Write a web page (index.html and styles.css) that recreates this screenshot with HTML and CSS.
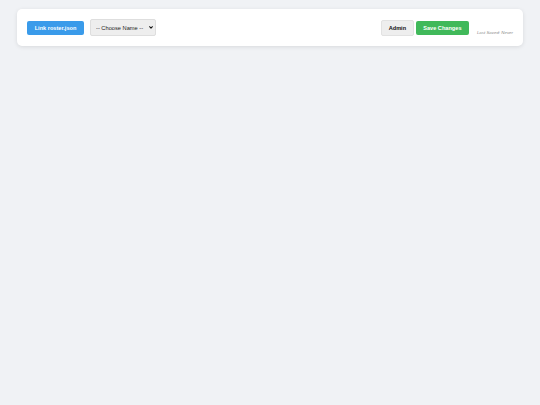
FILE: index.html
```html
<!DOCTYPE html>
<html>
<head>
<meta charset="utf-8">
<link rel="stylesheet" href="styles.css">
</head>
<body>
<div class="toolbar">
  <div class="group">
    <button class="btn btn-blue">Link roster.json</button>
    <div class="select-wrap">
      <select class="name-select">
        <option>-- Choose Name --</option>
      </select>
      <svg class="chevron" viewBox="0 0 10 7" width="4" height="3" aria-hidden="true">
        <path d="M1.5 1.5 L5 5 L8.5 1.5" fill="none" stroke="#111" stroke-width="2.6" stroke-linecap="round" stroke-linejoin="round"/>
      </svg>
    </div>
  </div>
  <div class="group">
    <button class="btn btn-gray">Admin</button>
    <button class="btn btn-green">Save Changes</button>
    <span class="saved">Last Saved: Never</span>
  </div>
</div>
</body>
</html>
```
FILE: styles.css
```css
html, body {
  margin: 0;
  padding: 0;
  background: #f0f2f5;
  font-family: "Liberation Sans", Arial, sans-serif;
}
body {
  padding: 9px 17px;
}
.toolbar {
  height: 37px;
  box-sizing: border-box;
  background: #ffffff;
  border-radius: 5px;
  box-shadow: 0 1px 4px rgba(0, 0, 0, 0.10);
  padding: 0 10px;
  display: flex;
  align-items: center;
  justify-content: space-between;
}
.group {
  display: flex;
  align-items: center;
}
.btn {
  font-family: "Liberation Sans", Arial, sans-serif;
  font-size: 5.6px;
  font-weight: bold;
  border: none;
  border-radius: 2px;
  height: 14px;
  padding: 0;
  margin: 0;
  cursor: pointer;
}
.btn-blue {
  background: #3a9bea;
  color: #ffffff;
  width: 57px;
}
.select-wrap {
  position: relative;
  margin-left: 6px;
  display: flex;
}
.name-select {
  -webkit-appearance: none;
  appearance: none;
  width: 66px;
  height: 17px;
  box-sizing: border-box;
  font-family: "Liberation Sans", Arial, sans-serif;
  font-size: 5.7px;
  color: #222;
  background: #eeeeee;
  border: 1px solid #dedede;
  border-radius: 2px;
  padding: 0 0 0 5px;
  margin: 0;
}
.chevron {
  position: absolute;
  right: 3px;
  top: 7px;
  pointer-events: none;
}
.btn-gray {
  background: #eeeeee;
  color: #111;
  width: 33px;
  height: 16px;
  border: 1px solid #e2e2e2;
}
.btn-green {
  background: #40b95a;
  color: #ffffff;
  width: 53px;
  margin-left: 2px;
}
.saved {
  margin-left: 8px;
  margin-top: 10px;
  font-size: 4.4px;
  font-style: italic;
  color: #8a8a8a;
}
```
